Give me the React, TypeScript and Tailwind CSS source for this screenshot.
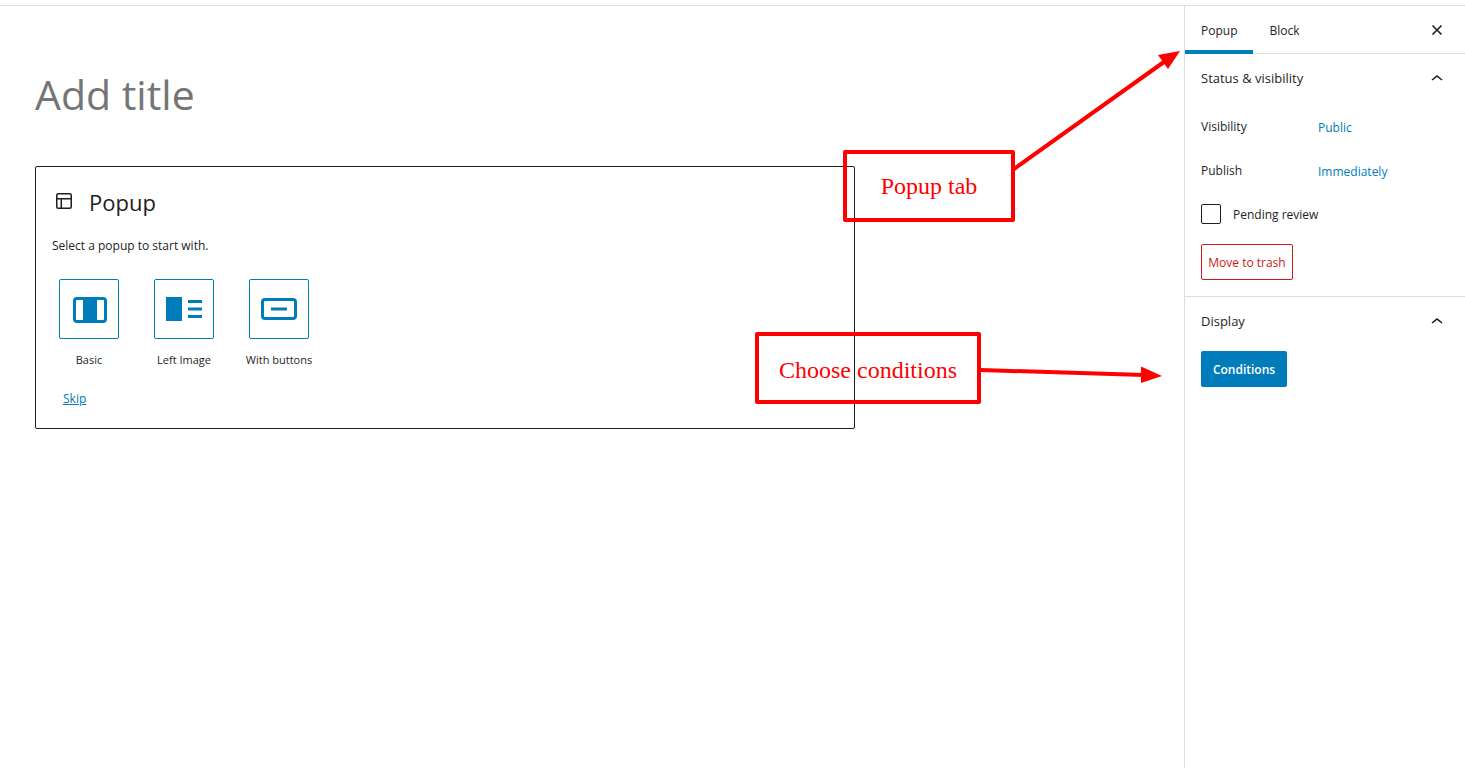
import React, { useState } from "react";

type Variation = { name: string; icon: React.ReactNode };

const variations: Variation[] = [
  {
    name: "Basic",
    icon: (
      <svg className="shrink-0" width="60" height="60" viewBox="0 0 60 60" fill="none" aria-hidden="true">
        <rect x="15.500" y="19.500" width="31" height="23" rx="2.500" stroke="#007cba" strokeWidth="3" />
        <rect x="24" y="19" width="14" height="24" fill="#007cba" />
      </svg>
    ),
  },
  {
    name: "Left Image",
    icon: (
      <svg className="shrink-0" width="60" height="60" viewBox="0 0 60 60" fill="#007cba" aria-hidden="true">
        <rect x="12" y="18" width="16" height="24" />
        <rect x="34" y="21" width="14" height="3" />
        <rect x="34" y="28.500" width="14" height="3" />
        <rect x="34" y="36" width="14" height="3" />
      </svg>
    ),
  },
  {
    name: "With buttons",
    icon: (
      <svg className="shrink-0" width="60" height="60" viewBox="0 0 60 60" fill="none" aria-hidden="true">
        <rect x="13.500" y="20.500" width="33" height="19" rx="2.500" stroke="#007cba" strokeWidth="3" />
        <rect x="22" y="28.500" width="16" height="3" fill="#007cba" />
      </svg>
    ),
  },
];

function ChevronUp() {
  return (
    <svg width="24" height="24" viewBox="0 0 24 24" fill="#1e1e1e" aria-hidden="true">
      <path d="M6.500 12.400L12 8l5.500 4.400-.9 1.200L12 10l-4.500 3.600-1-1.200z" />
    </svg>
  );
}

function Panel({ title, children }: { title: string; children: React.ReactNode }) {
  const [open, setOpen] = useState(true);
  return (
    <section>
      <h2>
        <button
          type="button"
          aria-expanded={open}
          onClick={() => setOpen(!open)}
          className="flex h-[50px] w-full items-center justify-between px-4 text-[13px] font-medium"
        >
          {title}
          <ChevronUp />
        </button>
      </h2>
      {open && <div className="px-4 pt-1 pb-4">{children}</div>}
    </section>
  );
}

function Annotations() {
  return (
    <div className="pointer-events-none absolute inset-0 font-['Liberation_Serif',serif] text-2xl text-[#ff0000]">
      <svg className="absolute top-0 left-0" width="1184" height="420" viewBox="0 6 1184 420" aria-hidden="true">
        <path d="M1014 169L1166 60.500" stroke="#ff0000" strokeWidth="4" />
        <path d="M1180 51L1158 55L1168 69z" fill="#ff0000" />
        <path d="M981 370L1144 375" stroke="#ff0000" strokeWidth="4" />
        <path d="M1162 376L1141 366.500V383z" fill="#ff0000" />
      </svg>
      <div className="absolute top-36 left-[843px] flex h-[72px] w-[172px] items-center justify-center rounded-xs border-4 border-[#ff0000]">
        Popup tab
      </div>
      <div className="absolute top-[326px] left-[755px] flex h-[72px] w-[226px] items-center justify-center rounded-xs border-4 border-[#ff0000] pt-1">
        Choose conditions
      </div>
    </div>
  );
}

export default function App() {
  const [tab, setTab] = useState("Popup");
  return (
    <div className="flex min-h-screen flex-col bg-white font-['Open_Sans','Noto_Sans',sans-serif] text-xs text-[#1e1e1e]">
      <header className="h-1.5 border-b border-[#ddd]" />
      <div className="flex flex-1">
        <main className="relative min-w-0 flex-1 px-[35px] pt-[58px]">
          <input
            aria-label="Add title"
            placeholder="Add title"
            className="block h-[60px] w-full max-w-[820px] text-[41px] outline-none placeholder:text-[#757575]"
          />
          <section className="mt-[42px] h-[263px] max-w-[820px] rounded-xs border border-[#1e1e1e] px-4 pt-4">
            <h1 className="flex h-10 items-center gap-[13px] text-[22px]">
              <svg width="24" height="24" viewBox="0 0 24 24" fill="none" stroke="#1e1e1e" strokeWidth="1.5" aria-hidden="true">
                <rect x="4.750" y="2.750" width="14.500" height="14.500" rx="1.500" />
                <path d="M4.500 7.750h15M9.250 8v9.500" />
              </svg>
              Popup
            </h1>
            <p className="mt-[13px] leading-5">Select a popup to start with.</p>
            <ul className="mt-[23px] flex">
              {variations.map((v) => (
                <li key={v.name} className="w-[95px]">
                  <button type="button" className="flex w-[74px] flex-col items-center text-[11px] whitespace-nowrap">
                    <span className="flex size-[60px] items-center justify-center rounded-xs border border-[#007cba]">
                      {v.icon}
                    </span>
                    <span className="mt-[13px] leading-4">{v.name}</span>
                  </button>
                </li>
              ))}
            </ul>
            <button type="button" className="mt-[21px] ml-[11px] leading-5 text-[#007cba] underline">
              Skip
            </button>
          </section>
          <Annotations />
        </main>
        <aside className="w-[281px] shrink-0 border-l border-[#ddd]">
          <div className="flex h-12 items-stretch border-b border-[#ddd] pr-4">
            {["Popup", "Block"].map((name) => (
              <button
                key={name}
                type="button"
                onClick={() => setTab(name)}
                className={
                  tab === name
                    ? "-mb-px px-4 pt-0.5 font-medium shadow-[inset_0_-4px_0_0_#007cba]"
                    : "-mb-px px-4 pt-0.5 font-medium"
                }
              >
                {name}
              </button>
            ))}
            <button type="button" aria-label="Close settings" className="ml-auto">
              <svg width="24" height="24" viewBox="0 0 24 24" stroke="#1e1e1e" strokeWidth="1.600" aria-hidden="true">
                <path d="M7.500 7.500l9 9M16.500 7.500l-9 9" />
              </svg>
            </button>
          </div>
          <Panel title="Status & visibility">
            <div className="flex flex-col gap-1.5">
              <div className="flex h-[38px] items-center">
                <span className="w-[117px]">Visibility</span>
                <button type="button" className="pt-0.5 text-[#007cba]">Public</button>
              </div>
              <div className="flex h-[38px] items-center">
                <span className="w-[117px]">Publish</span>
                <button type="button" className="pt-0.5 text-[#007cba]">Immediately</button>
              </div>
            </div>
            <label className="mt-3.5 flex h-5 items-center gap-3">
              <input type="checkbox" className="size-5 appearance-none rounded-xs border border-[#1e1e1e] checked:bg-[#007cba]" />
              <span className="pt-0.5">Pending review</span>
            </label>
            <button type="button" className="mt-5 block h-9 w-[92px] rounded-xs border border-[#cc1818] pt-0.5 whitespace-nowrap text-[#cc1818]">
              Move to trash
            </button>
          </Panel>
          <div className="border-t border-[#ddd]">
            <Panel title="Display">
              <button type="button" className="block h-9 w-[86px] rounded-xs bg-[#007cba] pt-0.5 font-semibold text-white">
                Conditions
              </button>
            </Panel>
          </div>
        </aside>
      </div>
    </div>
  );
}
